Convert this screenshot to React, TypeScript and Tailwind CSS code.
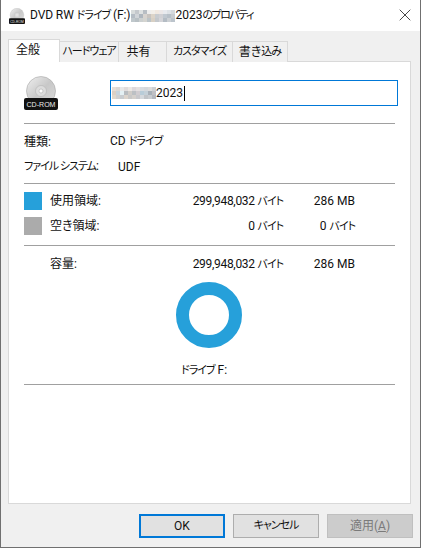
import { X } from "lucide-react";

const font = "font-['Roboto','Noto_Sans_CJK_JP',sans-serif] [font-feature-settings:'palt']";

const titleMosaic = [
  ["#d8dcdc", "#c4c8cc", "#dfe2e2", "#b8bec4", "#eeeeee", "#f2efea", "#f0e8e0", "#ece8e8", "#e8eaee", "#dee2e6", "#d4d8dc"],
  ["#b4bcc4", "#d0d4d8", "#aeb6be", "#d8d4d0", "#c8c4c0", "#dcd4c8", "#c8ccd0", "#d0d0d4", "#c0c8d0", "#b8c0c8", "#c8ccd0"],
  ["#c0c8cc", "#b8c0c4", "#ccd0d0", "#d4d4d0", "#bcc4c8", "#d8d0c4", "#c4c8cc", "#d4d4d8", "#b4bcc4", "#ccd0d4", "#bcc4cc"],
];

const inputMosaic = [
  ["#e6ded6", "#dcd8d4", "#e8e8e8", "#e0dcdc", "#ece8e4", "#dcd8dc", "#e4e0e0", "#d8dce0", "#d4d8dc", "#dcdcdc", "#ccd0d4"],
  ["#dcd0c4", "#c8d4dc", "#e4f0f4", "#b8bcc0", "#d0ccc8", "#bcc0c4", "#d0ccd0", "#b8ccd8", "#c4d0d8", "#a8b0b8", "#c0c0c4"],
  ["#e0d8cc", "#d0d0d0", "#c8ccd0", "#dcd4cc", "#c8c8c8", "#d4d0cc", "#c8c8cc", "#d4d8dc", "#c0c4c8", "#c8ccd0", "#b4b8c0"],
];

function Mosaic({ rows, className }: { rows: string[][]; className?: string }) {
  const cell = 4;
  const w = rows[0].length * cell;
  const h = rows.length * cell;
  return (
    <svg width={w} height={h} viewBox={`0 0 ${w} ${h}`} className={`shrink-0 ${className ?? ""}`} shapeRendering="crispEdges">
      {rows.map((r, y) => r.map((c, x) => <rect key={`${x}-${y}`} x={x * cell} y={y * cell} width={cell} height={cell} fill={c} />))}
    </svg>
  );
}

function Disc({ size, label }: { size: number; label: number }) {
  return (
    <svg width={size} height={size} viewBox="0 0 34 34" className="shrink-0">
      <defs>
        <linearGradient id={`disc${size}`} x1="0" y1="0" x2="1" y2="1">
          <stop offset="0" stopColor="#f0f0f0" />
          <stop offset="0.5" stopColor="#c8c8c8" />
          <stop offset="1" stopColor="#dcdcdc" />
        </linearGradient>
      </defs>
      <circle cx="17" cy="15" r="14.5" fill={`url(#disc${size})`} stroke="#a8a8a8" strokeWidth="0.6" />
      <circle cx="17" cy="15" r="5.5" fill="#dcdcdc" stroke="#b4b4b4" strokeWidth="0.6" />
      <circle cx="17" cy="15" r="2" fill="#ffffff" stroke="#a0a0a0" strokeWidth="0.5" />
      <rect x="0" y="22" width="34" height="12" rx="2" fill="#111111" />
      <text x="17" y="31" textAnchor="middle" fontSize={label} textLength="29" lengthAdjust="spacingAndGlyphs" fill="#e8e8e8" fontFamily="'Liberation Sans', sans-serif">CD-ROM</text>
    </svg>
  );
}

// kana in the reference's UI font run much narrower than Noto's
function K({ children }: { children: React.ReactNode }) {
  return <span className="text-[11px] tracking-[-1px]">{children}</span>;
}

function Tab({ label, className }: { label: string; className: string }) {
  return (
    <div className={`h-[21px] border border-b-0 border-l-0 border-[#d9d9d9] bg-[#f0f0f0] flex items-center justify-center text-[12px] whitespace-nowrap ${className}`}>
      <K>{label}</K>
    </div>
  );
}

function Rule() {
  return <div className="h-px bg-[#a0a0a0] shrink-0" />;
}

function Button({ label, className }: { label: React.ReactNode; className: string }) {
  return <div className={`w-[86px] h-[24px] flex items-center justify-center text-[12px] ${className}`}>{label}</div>;
}

function Usage({ swatch, name, bytes, size }: { swatch?: string; name: string; bytes: React.ReactNode; size: React.ReactNode }) {
  return (
    <div className="flex items-center h-[18px]">
      <div className={`w-[18px] h-[18px] shrink-0 ${swatch ?? ""}`} />
      <span className="ml-[8px] w-[120px]">{name}</span>
      <span className="w-[113px] text-right whitespace-nowrap tracking-[-0.3px]">{bytes}</span>
      <span className="w-[72px] text-right whitespace-nowrap">{size}</span>
    </div>
  );
}

export default function App() {
  return (
    <div className={`${font} w-[421px] h-[548px] bg-[#f0f0f0] border-x border-b border-[#707070] flex flex-col text-[#111] text-[12px] overflow-hidden`}>
      <div className="h-[31px] bg-white flex items-center shrink-0 relative">
        <div className="ml-[8px]">
          <Disc size={16} label={8} />
        </div>
        <span className="ml-[5px] whitespace-nowrap tracking-[-0.1px]">DVD RW <K>ドライブ</K> (F:)</span>
        <Mosaic rows={titleMosaic} className="ml-px" />
        <span className="whitespace-nowrap">2023<span className="text-[11px] tracking-[-1.5px]">のプロパティ</span></span>
        <X className="absolute right-[5px] top-[5px] w-5 h-5 text-[#222]" strokeWidth={1} absoluteStrokeWidth />
      </div>

      <div className="flex-1 flex flex-col px-[7px] pt-[8px]">
        <div className="flex items-end h-[23px] shrink-0 relative z-10 -mb-px">
          <div className="w-[52px] h-[23px] bg-white border border-b-0 border-[#d9d9d9] flex items-center pl-[7px] pb-[2px] text-[12px]">全般</div>
          <Tab label="ハードウェア" className="w-[59px] tracking-[-0.5px]" />
          <div className="h-[21px] w-[48px] border border-b-0 border-l-0 border-[#d9d9d9] bg-[#f0f0f0] flex items-center justify-center pr-[8px]">共有</div>
          <Tab label="カスタマイズ" className="w-[66px]" />
          <div className="h-[21px] w-[55px] border border-b-0 border-l-0 border-[#d9d9d9] bg-[#f0f0f0] flex items-center justify-center whitespace-nowrap">書き<K>込み</K></div>
        </div>

        <div className="h-[443px] w-[403px] bg-white border border-[#d9d9d9] px-[15px] flex flex-col shrink-0">
          <div className="h-[61px] flex items-center shrink-0 pt-[1px]">
            <Disc size={34} label={8} />
            <div className="ml-[52px] -mr-[3px] flex-1 h-[26px] border border-[#0078d7] flex items-center pl-[1px]">
              <Mosaic rows={inputMosaic} />
              <span>2023</span>
              <span className="w-px h-[15px] bg-black ml-px" />
            </div>
          </div>
          <Rule />

          <div className="h-[59px] pt-[5px] shrink-0">
            <div className="h-[25px] flex items-center">
              <span className="w-[86px]">種類:</span>
              <span>CD <K>ドライブ</K></span>
            </div>
            <div className="h-[25px] flex items-center">
              <span className="w-[94px] whitespace-nowrap"><K>ファイル システム</K>:</span>
              <span>UDF</span>
            </div>
          </div>
          <Rule />

          <div className="h-[61px] pt-[8px] flex flex-col gap-[7px] shrink-0">
            <Usage swatch="bg-[#26a0da]" name="使用領域:" bytes={<>299,948,032 <K>バイト</K></>} size="286 MB" />
            <Usage swatch="bg-[#ababab]" name="空き領域:" bytes={<>0 <K>バイト</K></>} size={<>0 <K>バイト</K></>} />
          </div>
          <Rule />

          <div className="h-[138px] pt-[9px] flex flex-col shrink-0">
            <Usage name="容量:" bytes={<>299,948,032 <K>バイト</K></>} size="286 MB" />
            <div className="mt-[9px] ml-[152px] w-[66px] h-[66px] rounded-full border-[13px] border-[#26a0da] shrink-0" />
            <div className="mt-[13px] ml-[157px] whitespace-nowrap"><K>ドライブ</K> F:</div>
          </div>
          <Rule />
        </div>

        <div className="flex justify-end gap-[8px] mt-[10px]">
          <Button label="OK" className="border-2 border-[#0078d7] bg-[#e1e1e1]" />
          <Button label={<K>キャンセル</K>} className="border border-[#adadad] bg-[#e1e1e1]" />
          <Button
            label={<span>適用(<span className="underline">A</span>)</span>}
            className="border border-[#bfbfbf] bg-[#cccccc] text-[#7a7a7a]"
          />
        </div>
      </div>
    </div>
  );
}
